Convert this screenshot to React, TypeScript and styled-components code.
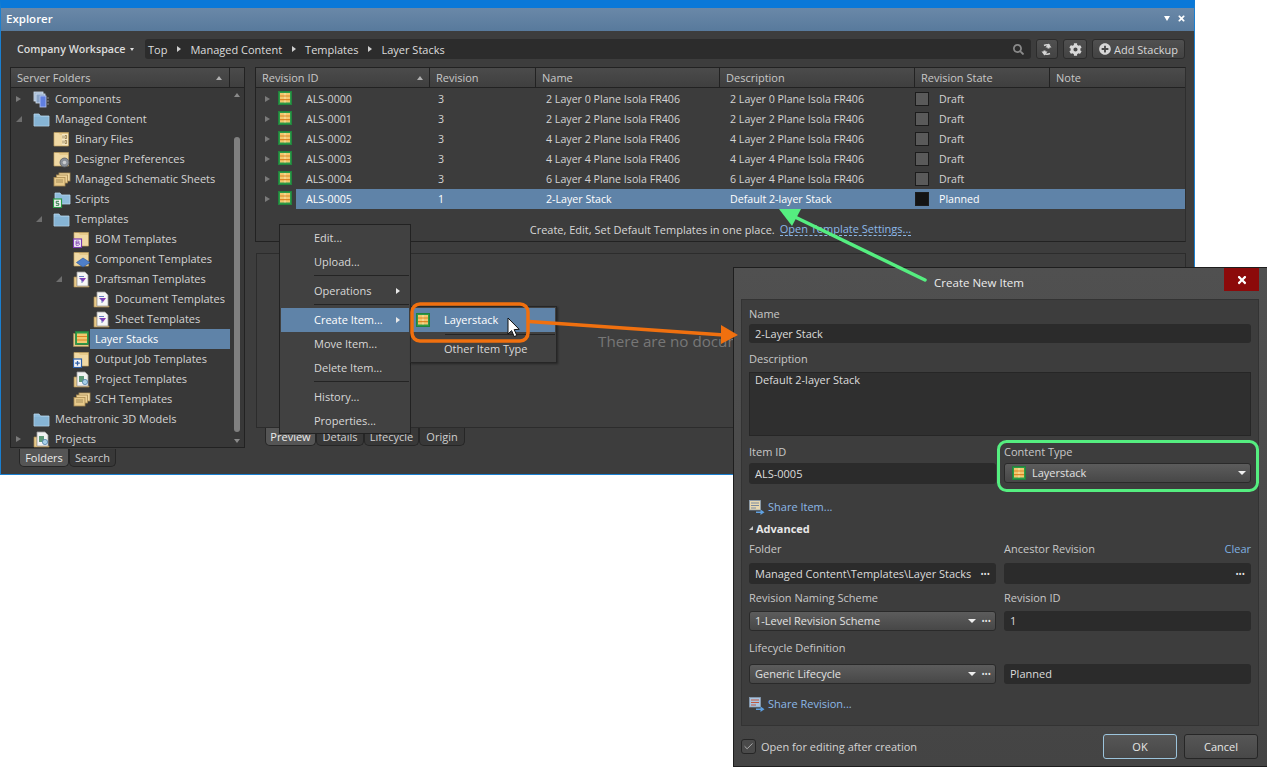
import styled, { createGlobalStyle } from 'styled-components'
import { FaCog, FaPlusCircle, FaSearch, FaTimes } from 'react-icons/fa'
import { Check } from 'lucide-react'

const GlobalStyle = createGlobalStyle`
  html, body {
    margin: 0;
    padding: 0;
    background: #ffffff;
  }
  * {
    box-sizing: border-box;
  }
`

type IconKind =
  | 'components'
  | 'folder'
  | 'binary'
  | 'prefs'
  | 'sheets'
  | 'scripts'
  | 'bom'
  | 'comp'
  | 'draft'
  | 'layers'
  | 'job'
  | 'project'
  | 'sch'

interface TreeItem {
  level: number
  icon: IconKind
  label: string
  expander?: 'open' | 'closed'
  selected?: boolean
}

const treeItems: TreeItem[] = [
  { level: 0, icon: 'components', label: 'Components', expander: 'closed' },
  { level: 0, icon: 'folder', label: 'Managed Content', expander: 'open' },
  { level: 1, icon: 'binary', label: 'Binary Files' },
  { level: 1, icon: 'prefs', label: 'Designer Preferences' },
  { level: 1, icon: 'sheets', label: 'Managed Schematic Sheets' },
  { level: 1, icon: 'scripts', label: 'Scripts' },
  { level: 1, icon: 'folder', label: 'Templates', expander: 'open' },
  { level: 2, icon: 'bom', label: 'BOM Templates' },
  { level: 2, icon: 'comp', label: 'Component Templates' },
  { level: 2, icon: 'draft', label: 'Draftsman Templates', expander: 'open' },
  { level: 3, icon: 'draft', label: 'Document Templates' },
  { level: 3, icon: 'draft', label: 'Sheet Templates' },
  { level: 2, icon: 'layers', label: 'Layer Stacks', selected: true },
  { level: 2, icon: 'job', label: 'Output Job Templates' },
  { level: 2, icon: 'project', label: 'Project Templates' },
  { level: 2, icon: 'sch', label: 'SCH Templates' },
  { level: 0, icon: 'folder', label: 'Mechatronic 3D Models' },
  { level: 0, icon: 'project', label: 'Projects', expander: 'closed' },
]

const gridRows = [
  { id: 'ALS-0000', rev: '3', name: '2 Layer 0 Plane Isola FR406', state: 'Draft' },
  { id: 'ALS-0001', rev: '3', name: '2 Layer 2 Plane Isola FR406', state: 'Draft' },
  { id: 'ALS-0002', rev: '3', name: '4 Layer 2 Plane Isola FR406', state: 'Draft' },
  { id: 'ALS-0003', rev: '3', name: '4 Layer 4 Plane Isola FR406', state: 'Draft' },
  { id: 'ALS-0004', rev: '3', name: '6 Layer 4 Plane Isola FR406', state: 'Draft' },
]

function LayerIcon() {
  return (
    <svg width="14" height="14" viewBox="0 0 14 14">
      <rect x="0.5" y="0.5" width="13" height="13" fill="#2c9a48" stroke="#23823c" />
      <rect x="2" y="2" width="10" height="9.5" fill="#f2c86e" />
      <path d="M2 5h10M2 8.7h10" stroke="#dc8424" strokeWidth="1.2" />
      <path d="M7 2v2.4M7 5.6v2.5M7 9.3v2.2" stroke="#f8e8b4" strokeWidth="0.9" />
    </svg>
  )
}

function TanFolder({ children }: { children?: React.ReactNode }) {
  return (
    <svg width="18" height="17" viewBox="0 0 18 17">
      <path d="M1 1.5h14.5v13.5H1z" fill="#e6c98a" stroke="#b89a5e" strokeWidth="0.8" />
      <path d="M1.5 2h4l1.5 2h8v10.5h-13.5z" fill="#f0d9a4" />
      {children}
    </svg>
  )
}

function TreeIcon({ kind }: { kind: IconKind }) {
  switch (kind) {
    case 'folder':
      return (
        <svg width="18" height="15" viewBox="0 0 18 15">
          <path d="M1 2h5l1.5 2H16v10H1z" fill="#8fbcdc" stroke="#b9d8ee" strokeWidth="0.8" />
          <rect x="1.5" y="5" width="14" height="8.5" fill="#86b4d4" />
        </svg>
      )
    case 'components':
      return (
        <svg width="18" height="17" viewBox="0 0 18 17">
          <rect x="1" y="1" width="9" height="9" fill="#9fb6cf" stroke="#d4e2ef" strokeWidth="0.8" />
          <rect x="3" y="3" width="9" height="9" fill="#8aa4c6" stroke="#d4e2ef" strokeWidth="0.8" />
          <rect x="7" y="5" width="6" height="11" fill="#5f7ee0" stroke="#b6c6f2" strokeWidth="0.8" />
          <path d="M14 7h2M14 10h2M14 13h2" stroke="#a0a0a0" strokeWidth="0.8" />
        </svg>
      )
    case 'binary':
      return (
        <TanFolder>
          <rect x="9" y="3" width="6" height="11" fill="#f6e6c0" />
          <path d="M10 4.5v3M12 4.5h1.6v3H12zM10 9.5v3M12 9.5h1.6v3H12z" fill="none" stroke="#8b7346" strokeWidth="0.8" />
        </TanFolder>
      )
    case 'prefs':
      return (
        <TanFolder>
          <circle cx="11.5" cy="11.5" r="4.5" fill="#8a9098" stroke="#585c62" strokeWidth="0.8" />
          <circle cx="11.5" cy="11.5" r="1.8" fill="#c9ccd0" />
        </TanFolder>
      )
    case 'sheets':
    case 'sch':
      return (
        <svg width="18" height="15" viewBox="0 0 18 15">
          <rect x="6" y="1" width="11" height="8" fill="#f0d9a4" stroke="#a98b50" strokeWidth="0.8" />
          <rect x="3.5" y="3" width="11" height="8" fill="#ecd097" stroke="#a98b50" strokeWidth="0.8" />
          <rect x="1" y="5.5" width="11" height="8.5" fill="#e6c98a" stroke="#a98b50" strokeWidth="0.8" />
          <path d="M3 8h7M3 10h7" stroke="#8b7346" strokeWidth="0.7" />
        </svg>
      )
    case 'scripts':
      return (
        <svg width="18" height="17" viewBox="0 0 18 17">
          <path d="M2 2h5l1.5 2H17v9H2z" fill="#8fbcdc" stroke="#b9d8ee" strokeWidth="0.8" />
          <rect x="0.5" y="8" width="8" height="8.5" fill="#f4f4f4" stroke="#2c9a48" strokeWidth="1.2" />
          <path d="M6 10.3H3.2v2h2.6v2H2.8" fill="none" stroke="#2c7a48" strokeWidth="1" />
        </svg>
      )
    case 'bom':
      return (
        <TanFolder>
          <rect x="0.5" y="8" width="8" height="8.5" fill="#f4f4f4" stroke="#7a3ab0" strokeWidth="1.2" />
          <path d="M3 10h2.2q1 0 1 1t-1 1H3v-2M3 12h2.5q1 0 1 1t-1 1.3H3V12" fill="none" stroke="#7a3ab0" strokeWidth="0.8" />
        </TanFolder>
      )
    case 'comp':
      return (
        <TanFolder>
          <path d="M10 7L17 11.5L10 16L3.5 11.5z" fill="#4f7fc8" stroke="#2e5aa0" strokeWidth="0.7" />
        </TanFolder>
      )
    case 'draft':
      return (
        <svg width="18" height="17" viewBox="0 0 18 17">
          <path d="M1 6h3v9h12v1H1z" fill="#e6c98a" stroke="#a98b50" strokeWidth="0.7" />
          <path d="M4 1h8l3 3v11H4z" fill="#f6f6f6" stroke="#a0a0a0" strokeWidth="0.8" />
          <path d="M6 7h7l-3 4z" fill="#8a3ab8" />
          <path d="M6 5.5h5M9 7v5" stroke="#4060b0" strokeWidth="0.8" />
        </svg>
      )
    case 'layers':
      return (
        <svg width="16" height="16" viewBox="0 0 16 16">
          <path d="M0.5 2.5h4v11h11v2H0.5z" fill="#e6c98a" stroke="#a98b50" strokeWidth="0.6" />
          <rect x="2.5" y="0.5" width="13" height="13" fill="#2c9a48" stroke="#23823c" strokeWidth="0.7" />
          <rect x="4" y="2.5" width="10" height="9.5" fill="#f2c86e" />
          <path d="M4 5.5h10M4 9h10" stroke="#dc8424" strokeWidth="1.2" />
        </svg>
      )
    case 'job':
      return (
        <TanFolder>
          <rect x="0.5" y="8" width="8" height="8.5" fill="#f4f4f4" stroke="#2e5fa8" strokeWidth="1.2" />
          <path d="M4.5 10v4.5M2.2 12.2h4.6" stroke="#2e5fa8" strokeWidth="1.3" />
        </TanFolder>
      )
    case 'project':
      return (
        <svg width="18" height="17" viewBox="0 0 18 17">
          <path d="M1 6h3v9h12v1H1z" fill="#e6c98a" stroke="#a98b50" strokeWidth="0.7" />
          <path d="M4 1h8l3 3v11H4z" fill="#f2f2f2" stroke="#a0a0a0" strokeWidth="0.8" />
          <rect x="6" y="5" width="5" height="6" fill="#5f9a78" />
          <circle cx="12" cy="11" r="2.6" fill="#a8d0e8" stroke="#4f7fa8" strokeWidth="0.8" />
        </svg>
      )
    default:
      return null
  }
}

function ArrowsIcon() {
  return (
    <svg width="12" height="13" viewBox="0 0 12 13" fill="#d6d6d6">
      <path d="M1 5l3-4 3 4H5v1H3V5z" transform="translate(3.5 -0.5)" />
      <path d="M1 8l3 4 3-4H5V7H3v1z" transform="translate(-0.5 0.5)" />
      <path d="M3 2.5q3-1.5 6 0M3 10.5q3 1.5 6 0" fill="none" stroke="#d6d6d6" strokeWidth="1.4" />
    </svg>
  )
}

function Share({ label, color, line }: { label: string; color: string; line: string }) {
  return (
    <ShareLink>
      <svg width="16" height="15" viewBox="0 0 16 15">
        <rect x="0.5" y="0.5" width="11" height="9.5" fill={color} stroke="#8aa0b8" strokeWidth="0.7" />
        <path d="M2 3h8M2 5.5h8M2 8h5" stroke={line} strokeWidth="1" />
        <path d="M7 11.5h4.5V9.5l4 2.7-4 2.7v-1.9H7z" fill="#5fa0e0" />
      </svg>
      <span>{label}</span>
    </ShareLink>
  )
}

export default function App() {
  return (
    <Page>
      <GlobalStyle />
      <Explorer>
        <TitleBar>
          <span>Explorer</span>
          <TitleControls>
            <TitleCaret />
            <FaTimes size={9} />
          </TitleControls>
        </TitleBar>
        <Toolbar>
          <Workspace>
            Company Workspace
            <SmallCaret />
          </Workspace>
          <Breadcrumb>
            <Crumb>Top</Crumb>
            <CrumbSep />
            <Crumb>Managed Content</Crumb>
            <CrumbSep />
            <Crumb>Templates</Crumb>
            <CrumbSep />
            <Crumb>Layer Stacks</Crumb>
            <SearchGlyph>
              <FaSearch size={11} />
            </SearchGlyph>
          </Breadcrumb>
          <ToolButton $w={22}>
            <ArrowsIcon />
          </ToolButton>
          <ToolButton $w={24}>
            <FaCog size={13} />
          </ToolButton>
          <ToolButton $w={93}>
            <FaPlusCircle size={12} />
            Add Stackup
          </ToolButton>
        </Toolbar>
        <Body>
          <LeftColumn>
            <FolderPanel>
              <ColumnHeader>
                <FolderHeaderCell>
                  Server Folders
                  <SortUp />
                </FolderHeaderCell>
                <HeaderStub />
              </ColumnHeader>
              <TreeArea>
                <Tree>
                  {treeItems.map((item) => (
                    <TreeRow key={item.label} $level={item.level}>
                      <Expander>
                        {item.expander === 'closed' && <Closed />}
                        {item.expander === 'open' && <Opened />}
                      </Expander>
                      <IconSlot>
                        <TreeIcon kind={item.icon} />
                      </IconSlot>
                      <TreeLabel $selected={item.selected}>{item.label}</TreeLabel>
                    </TreeRow>
                  ))}
                </Tree>
                <ScrollBar>
                  <ScrollArrow $up />
                  <Thumb />
                  <ScrollArrow />
                </ScrollBar>
              </TreeArea>
            </FolderPanel>
            <TabStrip $indent={9} $mt={1}>
              <Tab $w={50} $active>Folders</Tab>
              <Tab $w={47}>Search</Tab>
            </TabStrip>
          </LeftColumn>
          <RightColumn>
            <GridPanel>
              <ColumnHeader>
                <GridHeaderCell $w={174}>
                  Revision ID
                  <SortUp />
                </GridHeaderCell>
                <GridHeaderCell $w={106}>Revision</GridHeaderCell>
                <GridHeaderCell $w={184}>Name</GridHeaderCell>
                <GridHeaderCell $w={195}>Description</GridHeaderCell>
                <GridHeaderCell $w={135}>Revision State</GridHeaderCell>
                <GridHeaderCell $w={134}>Note</GridHeaderCell>
              </ColumnHeader>
              <GridBody>
                {gridRows.map((row) => (
                  <GridRow key={row.id}>
                    <RowGutter>
                      <Closed />
                      <LayerIcon />
                    </RowGutter>
                    <RowCells>
                      <Cell $w={134} $pad={10}>{row.id}</Cell>
                      <Cell $w={106} $pad={8}>{row.rev}</Cell>
                      <Cell $w={184} $pad={10}>{row.name}</Cell>
                      <Cell $w={195} $pad={10}>{row.name}</Cell>
                      <Cell $w={135} $pad={0}>
                        <StateBox />
                        {row.state}
                      </Cell>
                    </RowCells>
                  </GridRow>
                ))}
                <GridRow>
                  <RowGutter>
                    <Closed />
                    <LayerIcon />
                  </RowGutter>
                  <RowCells $selected>
                    <Cell $w={134} $pad={10}>ALS-0005</Cell>
                    <Cell $w={106} $pad={8}>1</Cell>
                    <Cell $w={184} $pad={10}>2-Layer Stack</Cell>
                    <Cell $w={195} $pad={10}>Default 2-layer Stack</Cell>
                    <Cell $w={135} $pad={0}>
                      <StateBox $dark />
                      Planned
                    </Cell>
                  </RowCells>
                </GridRow>
              </GridBody>
              <Hint>
                <span>Create, Edit, Set Default Templates in one place.</span>
                <HintLink>Open Template Settings...</HintLink>
              </Hint>
            </GridPanel>
            <PreviewPanel>There are no documents to display</PreviewPanel>
            <TabStrip $indent={10}>
              <Tab $w={51} $active>Preview</Tab>
              <Tab $w={48}>Details</Tab>
              <Tab $w={55}>Lifecycle</Tab>
              <Tab $w={46}>Origin</Tab>
            </TabStrip>
          </RightColumn>
        </Body>
      </Explorer>

      <ContextMenu>
        <MenuItem>Edit...</MenuItem>
        <MenuItem>Upload...</MenuItem>
        <MenuRule />
        <MenuItem>
          Operations
          <MenuArrow />
        </MenuItem>
        <MenuRule />
        <MenuItem $active>
          Create Item...
          <MenuArrow />
        </MenuItem>
        <MenuItem>Move Item...</MenuItem>
        <MenuItem>Delete Item...</MenuItem>
        <MenuRule />
        <MenuItem>History...</MenuItem>
        <MenuItem>Properties...</MenuItem>
      </ContextMenu>
      <SubMenu>
        <SubItem $active>
          <SubIcon>
            <LayerIcon />
          </SubIcon>
          Layerstack
        </SubItem>
        <SubRule />
        <SubItem>Other Item Type</SubItem>
      </SubMenu>

      <Dialog>
        <DialogHeader>
          Create New Item
          <CloseButton>
            <FaTimes size={12} />
          </CloseButton>
        </DialogHeader>
        <FormPanel>
          <FieldLabel>Name</FieldLabel>
          <TextField $h={19} $mt={2}>2-Layer Stack</TextField>
          <FieldLabel $mt={8}>Description</FieldLabel>
          <TextArea>Default 2-layer Stack</TextArea>
          <FormRow $mt={8}>
            <FieldLabel>Item ID</FieldLabel>
            <FieldLabel>Content Type</FieldLabel>
          </FormRow>
          <FormRow $mt={3}>
            <TextField $h={21}>ALS-0005</TextField>
            <DropField>
              <LayerIcon />
              <DropText>Layerstack</DropText>
              <DropCaret />
            </DropField>
          </FormRow>
          <ShareRow $mt={15}>
            <Share label="Share Item..." color="#e8d8b0" line="#7a8aa0" />
          </ShareRow>
          <AdvancedRow>
            <Opened />
            Advanced
          </AdvancedRow>
          <FormRow $mt={5}>
            <FieldLabel>Folder</FieldLabel>
            <LabelLine>
              <FieldLabel>Ancestor Revision</FieldLabel>
              <ClearLink>Clear</ClearLink>
            </LabelLine>
          </FormRow>
          <FormRow $mt={6}>
            <TextField $h={21}>
              <FieldText>Managed Content\Templates\Layer Stacks</FieldText>
              <Dots>•••</Dots>
            </TextField>
            <TextField $h={21}>
              <FieldText />
              <Dots>•••</Dots>
            </TextField>
          </FormRow>
          <FormRow $mt={6}>
            <FieldLabel>Revision Naming Scheme</FieldLabel>
            <FieldLabel>Revision ID</FieldLabel>
          </FormRow>
          <FormRow $mt={5}>
            <DropField>
              <DropText>1-Level Revision Scheme</DropText>
              <DropCaret />
              <Dots>•••</Dots>
            </DropField>
            <TextField $h={20}>1</TextField>
          </FormRow>
          <FormRow $mt={9}>
            <FieldLabel>Lifecycle Definition</FieldLabel>
          </FormRow>
          <FormRow $mt={8}>
            <DropField>
              <DropText>Generic Lifecycle</DropText>
              <DropCaret />
              <Dots>•••</Dots>
            </DropField>
            <TextField $h={20}>Planned</TextField>
          </FormRow>
          <ShareRow $mt={12}>
            <Share label="Share Revision..." color="#a8c4e0" line="#c05840" />
          </ShareRow>
        </FormPanel>
        <DialogFooter>
          <CheckRow>
            <CheckBox>
              <Check size={11} strokeWidth={1.5} />
            </CheckBox>
            Open for editing after creation
          </CheckRow>
          <FooterButtons>
            <FooterButton $primary>OK</FooterButton>
            <FooterButton>Cancel</FooterButton>
          </FooterButtons>
        </DialogFooter>
      </Dialog>

      <Annotations width="1267" height="767" viewBox="0 0 1267 767">
        <rect x="412" y="304" width="116" height="37" rx="8" fill="none" stroke="#f0700f" strokeWidth="3.5" />
        <path d="M529 321.5L724 335" stroke="#f0700f" strokeWidth="3.5" />
        <path d="M721 325L738 335L721 344z" fill="#f0700f" />
        <path d="M925 280L795 217" stroke="#55ee80" strokeWidth="3.5" strokeLinecap="round" />
        <path d="M779 209L801 209L792 226z" fill="#55ee80" />
        <rect x="998.5" y="441.5" width="259" height="49" rx="8" fill="none" stroke="#55ee80" strokeWidth="3" />
        <path
          d="M508 318v16l3.6-3.4 2.6 6 2.6-1.1-2.6-5.9 5-.3z"
          fill="#ffffff"
          stroke="#111111"
          strokeWidth="1"
        />
      </Annotations>
    </Page>
  )
}

const font = `'Open Sans', 'Noto Sans', 'Liberation Sans', sans-serif`

const Page = styled.div`
  position: relative;
  width: 1267px;
  height: 767px;
  overflow: hidden;
  background: #ffffff;
  font-family: ${font};
  font-size: 11px;
  color: #dcdcdc;
`

const Explorer = styled.div`
  width: 1195px;
  height: 475px;
  display: flex;
  flex-direction: column;
  background: #3d3d3d;
  border: 1px solid #1a7fd0;
  border-top: 8px solid #0a78d8;
`

const TitleBar = styled.div`
  height: 23px;
  flex: none;
  padding: 0 8px 2px 5px;
  display: flex;
  align-items: center;
  justify-content: space-between;
  background: linear-gradient(#6a88a8, #587a9c);
  color: #ffffff;
  font-size: 11.5px;
  font-weight: 600;
`

const TitleControls = styled.div`
  display: flex;
  align-items: center;
  gap: 7px;
`

const TitleCaret = styled.i`
  width: 0;
  height: 0;
  border-left: 3.5px solid transparent;
  border-right: 3.5px solid transparent;
  border-top: 5px solid #ffffff;
`

const Toolbar = styled.div`
  height: 36px;
  flex: none;
  padding: 0 9px 0 16px;
  display: flex;
  align-items: center;
  gap: 5px;
`

const Workspace = styled.div`
  width: 123px;
  flex: none;
  display: flex;
  align-items: center;
  gap: 4px;
  font-weight: 600;
  font-size: 10.7px;
`

const SmallCaret = styled.i`
  width: 0;
  height: 0;
  border-left: 2.5px solid transparent;
  border-right: 2.5px solid transparent;
  border-top: 3px solid #e0e0e0;
`

const Breadcrumb = styled.div`
  flex: 1;
  height: 20px;
  padding: 0 3px;
  display: flex;
  align-items: center;
  gap: 9.5px;
  background: #2c2c2c;
  border-radius: 3px;
`

const Crumb = styled.span``

const CrumbSep = styled.i`
  width: 0;
  height: 0;
  border-top: 3.5px solid transparent;
  border-bottom: 3.5px solid transparent;
  border-left: 4px solid #d0d0d0;
`

const SearchGlyph = styled.span`
  margin-left: auto;
  margin-right: 4px;
  display: flex;
  color: #8a8a8a;
`

const ToolButton = styled.div<{ $w: number }>`
  width: ${(p) => p.$w}px;
  height: 20px;
  flex: none;
  display: flex;
  align-items: center;
  justify-content: center;
  gap: 3px;
  background: linear-gradient(#505050, #434343);
  border: 1px solid #2c2c2c;
  border-radius: 3px;
  color: #d8d8d8;
`

const Body = styled.div`
  flex: 1;
  padding: 0 8px 0 9px;
  display: flex;
  gap: 10px;
`

const LeftColumn = styled.div`
  width: 235px;
  flex: none;
`

const RightColumn = styled.div`
  flex: 1;
  min-width: 0;
`

const FolderPanel = styled.div`
  height: 381px;
  display: flex;
  flex-direction: column;
  background: #383838;
  border: 1px solid #222222;
`

const ColumnHeader = styled.div`
  height: 20px;
  flex: none;
  display: flex;
  background: linear-gradient(#4b4b4b, #3f3f3f);
  border-bottom: 1px solid #222222;
  color: #c8c8c8;
`

const FolderHeaderCell = styled.div`
  width: 219px;
  padding: 0 6px;
  padding-right: 7px;
  display: flex;
  align-items: center;
  justify-content: space-between;
  border-right: 1px solid #222222;
`

const HeaderStub = styled.div`
  flex: 1;
`

const SortUp = styled.i`
  width: 0;
  height: 0;
  border-left: 3.5px solid transparent;
  border-right: 3.5px solid transparent;
  border-bottom: 4px solid #b0b0b0;
`

const TreeArea = styled.div`
  flex: 1;
  display: flex;
  min-height: 0;
`

const Tree = styled.div`
  flex: 1;
  padding-top: 1px;
`

const TreeRow = styled.div<{ $level: number }>`
  height: 20px;
  display: flex;
  align-items: center;
  padding-left: ${(p) => 5 + p.$level * 20}px;
`

const Expander = styled.div`
  width: 17px;
  flex: none;
  display: flex;
`

const IconSlot = styled.div`
  width: 18px;
  flex: none;
  display: flex;
  align-items: center;
`

const TreeLabel = styled.div<{ $selected?: boolean }>`
  flex: 1;
  height: 20px;
  margin-left: -1px;
  padding-left: 5px;
  line-height: 20px;
  white-space: nowrap;
  background: ${(p) => (p.$selected ? '#5f83a8' : 'transparent')};
  color: ${(p) => (p.$selected ? '#ffffff' : '#d4d4d4')};
`

const Closed = styled.i`
  width: 0;
  height: 0;
  flex: none;
  border-top: 3.5px solid transparent;
  border-bottom: 3.5px solid transparent;
  border-left: 5px solid #7a7a7a;
`

const Opened = styled.i`
  width: 0;
  height: 0;
  flex: none;
  border-left: 6px solid transparent;
  border-bottom: 6px solid #6e6e6e;
`

const ScrollBar = styled.div`
  width: 14px;
  flex: none;
  padding: 5px 0 4px;
  display: flex;
  flex-direction: column;
  align-items: center;
  justify-content: space-between;
`

const ScrollArrow = styled.i<{ $up?: boolean }>`
  width: 0;
  height: 0;
  border-left: 3.5px solid transparent;
  border-right: 3.5px solid transparent;
  ${(p) => (p.$up ? 'border-bottom: 4px solid #8a8a8a;' : 'border-top: 4px solid #8a8a8a;')}
`

const Thumb = styled.div`
  width: 6px;
  height: 295px;
  margin-top: 32px;
  background: #808080;
  border-radius: 3px;
`

const TabStrip = styled.div<{ $indent: number; $mt?: number }>`
  display: flex;
  margin-top: ${(p) => p.$mt ?? 0}px;
  padding-left: ${(p) => p.$indent}px;
`

const Tab = styled.div<{ $w: number; $active?: boolean }>`
  width: ${(p) => p.$w}px;
  height: 18px;
  line-height: 17px;
  text-align: center;
  background: ${(p) => (p.$active ? '#555555' : '#383838')};
  border: 1px solid #262626;
  border-top: none;
  border-radius: 0 0 5px 5px;
  color: ${(p) => (p.$active ? '#ececec' : '#cfcfcf')};
`

const GridPanel = styled.div`
  height: 175px;
  display: flex;
  flex-direction: column;
  background: #3c3c3c;
  border: 1px solid #222222;
  border-right-color: #2e2e2e;
`

const GridHeaderCell = styled.div<{ $w: number }>`
  width: ${(p) => p.$w}px;
  padding: 0 6px;
  display: flex;
  align-items: center;
  justify-content: space-between;
  border-right: 1px solid #222222;
  &:last-child {
    border-right: none;
  }
`

const GridBody = styled.div`
  padding-top: 1px;
`

const GridRow = styled.div`
  height: 20px;
  display: flex;
`

const RowGutter = styled.div`
  width: 40px;
  flex: none;
  display: flex;
  align-items: center;
  gap: 8px;
  padding-left: 9px;
  svg {
    margin-top: -2px;
  }
`

const RowCells = styled.div<{ $selected?: boolean }>`
  flex: 1;
  display: flex;
  align-items: center;
  background: ${(p) => (p.$selected ? '#5f83a8' : 'transparent')};
  color: ${(p) => (p.$selected ? '#ffffff' : '#d4d4d4')};
  font-size: 10.65px;
`

const Cell = styled.div<{ $w: number; $pad: number }>`
  width: ${(p) => p.$w}px;
  flex: none;
  padding-left: ${(p) => p.$pad}px;
  display: flex;
  align-items: center;
  white-space: nowrap;
`

const StateBox = styled.i<{ $dark?: boolean }>`
  width: 14px;
  height: 14px;
  margin-right: 10px;
  background: ${(p) => (p.$dark ? '#141414' : '#5a5a5a')};
  border: 1px solid #1c1c1c;
`

const Hint = styled.div`
  flex: 1;
  display: flex;
  align-items: center;
  justify-content: center;
  gap: 5px;
  padding-top: 8px;
  white-space: nowrap;
  color: #d8d8d8;
`

const HintLink = styled.span`
  color: #8cb8e8;
  border-bottom: 1px dashed #8cb8e8;
  line-height: 13px;
`

const PreviewPanel = styled.div`
  height: 175px;
  margin-top: 11px;
  margin-left: 1px;
  padding-top: 1px;
  display: flex;
  align-items: center;
  justify-content: center;
  background: #3e3e3e;
  border: 1px solid #2c2c2c;
  color: #777777;
  font-size: 15.2px;
`

const ContextMenu = styled.div`
  position: absolute;
  left: 279px;
  top: 224px;
  width: 132px;
  height: 210px;
  padding: 1px 1px;
  background: #414141;
  border: 1px solid #222222;
`

const MenuItem = styled.div<{ $active?: boolean }>`
  position: relative;
  height: 24px;
  padding-left: 33px;
  line-height: 24px;
  background: ${(p) => (p.$active ? '#5f83a8' : 'transparent')};
  color: ${(p) => (p.$active ? '#ffffff' : '#d8d8d8')};
`

const MenuArrow = styled.i`
  position: absolute;
  right: 9px;
  top: 9px;
  width: 0;
  height: 0;
  border-top: 3.5px solid transparent;
  border-bottom: 3.5px solid transparent;
  border-left: 4px solid #e8e8e8;
`

const MenuRule = styled.div`
  height: 4px;
  margin-top: 1px;
  margin-left: 33px;
  border-top: 1px solid #242424;
`

const SubMenu = styled.div`
  position: absolute;
  left: 410px;
  top: 306px;
  width: 147px;
  height: 57px;
  padding: 1px 1px;
  background: #414141;
  border: 1px solid #262626;
  box-shadow: 1px 1px 2px rgba(0, 0, 0, 0.4);
`

const SubItem = styled.div<{ $active?: boolean }>`
  height: 24px;
  padding-left: 32px;
  position: relative;
  line-height: 24px;
  background: ${(p) => (p.$active ? '#5f83a8' : 'transparent')};
  color: ${(p) => (p.$active ? '#ffffff' : '#d8d8d8')};
`

const SubIcon = styled.span`
  position: absolute;
  left: 4px;
  top: 5px;
  display: flex;
`

const SubRule = styled.div`
  height: 3px;
  margin-top: 2px;
  margin-left: 33px;
  border-top: 1px solid #242424;
`

const Dialog = styled.div`
  position: absolute;
  left: 733px;
  top: 267px;
  width: 534px;
  height: 500px;
  display: flex;
  flex-direction: column;
  background: linear-gradient(#505050, #444444);
  border: 1px solid #1e1e1e;
  border-right: none;
`

const DialogHeader = styled.div`
  position: relative;
  height: 31px;
  flex: none;
  padding-top: 6px;
  text-align: center;
  line-height: 18px;
  color: #ececec;
  font-size: 11.5px;
  padding-right: 43px;
`

const CloseButton = styled.div`
  position: absolute;
  right: 8px;
  top: 0;
  width: 35px;
  height: 23px;
  display: flex;
  align-items: center;
  justify-content: center;
  background: #8c0a0a;
  color: #ffffff;
`

const FormPanel = styled.div`
  height: 427px;
  flex: none;
  margin: 0 8px 0 7px;
  padding: 6px 7px 0;
  background: #3d3d3d;
  border: 1px solid #333333;
`

const FieldLabel = styled.div<{ $mt?: number }>`
  height: 16px;
  margin-top: ${(p) => p.$mt ?? 0}px;
  line-height: 16px;
  color: #c8c8c8;
`

const LabelLine = styled.div`
  display: flex;
  justify-content: space-between;
`

const ClearLink = styled.span`
  color: #7fb0e0;
`

const FormRow = styled.div<{ $mt: number }>`
  margin-top: ${(p) => p.$mt}px;
  display: grid;
  grid-template-columns: 247px 247px;
  column-gap: 8px;
`

const TextField = styled.div<{ $h: number; $mt?: number }>`
  height: ${(p) => p.$h}px;
  margin-top: ${(p) => p.$mt ?? 0}px;
  padding: 0 6px 1px;
  display: flex;
  align-items: center;
  background: #2b2b2b;
  border-radius: 3px;
  color: #dcdcdc;
`

const FieldText = styled.span`
  flex: 1;
  white-space: nowrap;
  overflow: hidden;
`

const Dots = styled.span`
  margin-left: 5px;
  font-size: 8.5px;
  color: #e8e8e8;
`

const TextArea = styled.div`
  height: 64px;
  margin-top: 5px;
  padding: 0 5px;
  background: #2f2f2f;
  border: 1px solid #262626;
  color: #dcdcdc;
  line-height: 14px;
`

const DropField = styled.div`
  height: 20px;
  padding: 0 4px 1px 5px;
  display: flex;
  align-items: center;
  background: linear-gradient(#5c5c5c, #474747);
  border: 1px solid #2a2a2a;
  border-radius: 3px;
  color: #e2e2e2;
  svg {
    margin: 1px 6px 0 2px;
  }
`

const DropText = styled.span`
  flex: 1;
  white-space: nowrap;
`

const DropCaret = styled.i`
  width: 0;
  height: 0;
  border-left: 4px solid transparent;
  border-right: 4px solid transparent;
  border-top: 4px solid #efefef;
`

const ShareRow = styled.div<{ $mt: number }>`
  margin-top: ${(p) => p.$mt}px;
  height: 16px;
`

const ShareLink = styled.div`
  display: flex;
  align-items: center;
  gap: 3px;
  color: #8cb8e8;
  line-height: 16px;
`

const AdvancedRow = styled.div`
  margin-top: 5px;
  height: 16px;
  display: flex;
  align-items: center;
  gap: 3px;
  font-weight: 700;
  color: #e8e8e8;
  i {
    border-left-width: 4px;
    border-bottom-width: 4px;
    border-bottom-color: #c8c8c8;
  }
`

const DialogFooter = styled.div`
  flex: 1;
  padding: 0 9px 0 7px;
  display: flex;
  align-items: center;
  justify-content: space-between;
`

const CheckRow = styled.div`
  display: flex;
  align-items: center;
  gap: 5px;
  color: #d4d4d4;
`

const CheckBox = styled.div`
  width: 15px;
  height: 15px;
  display: flex;
  align-items: center;
  justify-content: center;
  background: #4a4a4a;
  border: 1px solid #262626;
  border-radius: 3px;
  color: #d8d8d8;
`

const FooterButtons = styled.div`
  display: flex;
  gap: 7px;
`

const FooterButton = styled.div<{ $primary?: boolean }>`
  width: 74px;
  height: 25px;
  line-height: 23px;
  text-align: center;
  background: linear-gradient(#565656, #484848);
  border: 1px solid ${(p) => (p.$primary ? '#9cc4dc' : '#262626')};
  border-radius: 3px;
  color: #e6e6e6;
`

const Annotations = styled.svg`
  position: absolute;
  left: 0;
  top: 0;
  pointer-events: none;
`
